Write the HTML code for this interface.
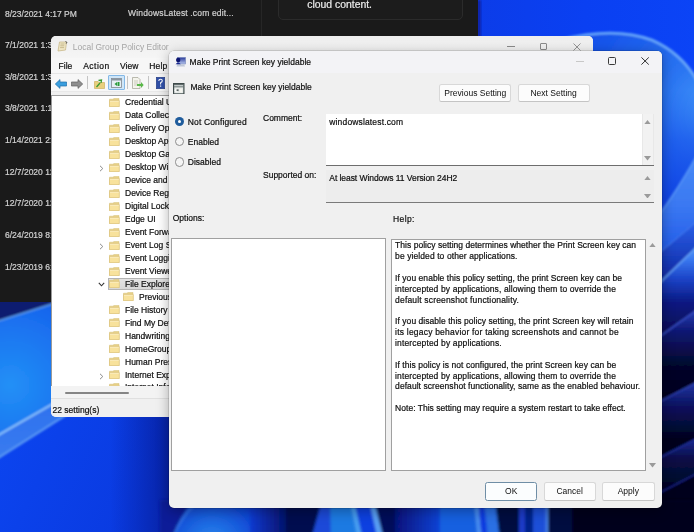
<!DOCTYPE html>
<html><head><meta charset="utf-8">
<style>
*{margin:0;padding:0;box-sizing:border-box}
html,body{width:694px;height:532px;overflow:hidden}
body{position:relative;font-family:"Liberation Sans",sans-serif;font-size:8.5px;color:#0e0e0e;background:#0a3ae0}
.abs{position:absolute}
.t{position:absolute;white-space:nowrap;line-height:10px;-webkit-text-stroke:0.2px currentColor}
#dark{will-change:transform;position:absolute;left:0;top:0;width:478px;height:301.5px;background:#1a1a1a;overflow:hidden}
#dark .t{color:#d2d2d2}
#lg{will-change:transform;position:absolute;left:51px;top:36px;width:542px;height:381px;background:#f0f0f0;border-radius:5px;overflow:hidden}
#dlg{will-change:transform;position:absolute;left:169px;top:51px;width:493px;height:457px;background:#f0f0f0;border-radius:5px;
 box-shadow:0 3px 13px rgba(0,0,0,.32), 0 0 0 0.5px rgba(0,0,0,.22)}
.btn{position:absolute;background:#fcfcfc;border:1px solid #d8d8d8;border-bottom-color:#c4c4c4;border-radius:2.5px;text-align:center;white-space:nowrap}
</style></head>
<body>
<svg width="0" height="0" style="position:absolute"><defs>
<g id="fold"><path d="M0.5,1.2 L4,1.2 L5,0.4 L10,0.4 L10,8.5 L0.5,8.5 Z" fill="#e6cf86" stroke="#d4bc70" stroke-width="0.5"/>
<path d="M0.5,2.6 L10.3,2.6 L10.3,8.7 L0.5,8.7 Z" fill="#f8e29c" stroke="#d8c07a" stroke-width="0.6"/>
<path d="M1,3.3 L9.8,3.3" stroke="#fcf0c8" stroke-width="0.8"/></g>
</defs></svg>
<svg id="wallsvg" width="694" height="532" viewBox="0 0 694 532" style="position:absolute;left:0;top:0">
<defs>
 <filter id="bl1" x="-10%" y="-10%" width="120%" height="120%"><feGaussianBlur stdDeviation="1.6"/></filter>
 <filter id="bl2" x="-10%" y="-10%" width="120%" height="120%"><feGaussianBlur stdDeviation="1"/></filter>
 <linearGradient id="gBotL" x1="0" y1="0" x2="1" y2="0.6">
  <stop offset="0" stop-color="#0c48f4"/><stop offset="1" stop-color="#0a3ae0"/>
 </linearGradient>
 <radialGradient id="gGlowL" cx="10" cy="385" r="110" gradientUnits="userSpaceOnUse">
  <stop offset="0" stop-color="#2290f6"/><stop offset="0.6" stop-color="#1a70f0"/><stop offset="1" stop-color="#1458e8"/>
 </radialGradient>
 <radialGradient id="gBloomTR" cx="700" cy="140" r="120" gradientUnits="userSpaceOnUse">
  <stop offset="0" stop-color="#3a8af6"/><stop offset="0.7" stop-color="#1e5ef0"/><stop offset="0.92" stop-color="#2a6cf2"/><stop offset="1" stop-color="#5a9cf8"/>
 </radialGradient>
 <radialGradient id="gGlowB" cx="212" cy="545" r="55" gradientUnits="userSpaceOnUse">
  <stop offset="0" stop-color="#2a8aee"/><stop offset="1" stop-color="#0a3ad0"/>
 </radialGradient>
 <linearGradient id="gBand1" x1="0" y1="0" x2="0" y2="1">
  <stop offset="0" stop-color="#4a92f6"/><stop offset="0.35" stop-color="#2a6cf0"/><stop offset="1" stop-color="#0e40dc"/>
 </linearGradient>
 <linearGradient id="gBand3" x1="0" y1="0" x2="0" y2="1">
  <stop offset="0" stop-color="#6aa6fa"/><stop offset="0.25" stop-color="#2a5ad8"/><stop offset="1" stop-color="#060c48"/>
 </linearGradient>
 <linearGradient id="gDim" x1="0" y1="0" x2="0" y2="1">
  <stop offset="0" stop-color="#25389e"/><stop offset="1" stop-color="#050a36"/>
 </linearGradient>
 <linearGradient id="gStrip" x1="0" y1="0" x2="0" y2="1">
  <stop offset="0" stop-color="#0c40e2"/><stop offset="1" stop-color="#2a78f2"/>
 </linearGradient>
</defs>
<rect x="0" y="0" width="694" height="532" fill="#0a3ae0"/>
<!-- top right -->
<rect x="470" y="0" width="230" height="320" fill="#0a3ae6"/>
<linearGradient id="gTR" x1="0" y1="0" x2="1" y2="0"><stop offset="0" stop-color="#0c3ce8"/><stop offset="0.5" stop-color="#0a40f2"/><stop offset="1" stop-color="#0b44f6"/></linearGradient>
<rect x="470" y="0" width="230" height="200" fill="url(#gTR)"/>
<rect x="477" y="0" width="4" height="40" fill="#0a24a8" filter="url(#bl2)"/>
<radialGradient id="gBl" cx="720" cy="115" r="150" gradientUnits="userSpaceOnUse">
 <stop offset="0" stop-color="#48a0fa"/><stop offset="0.4" stop-color="#2a74f2"/><stop offset="1" stop-color="#1450ea"/>
</radialGradient>
<g filter="url(#bl2)">
<path d="M560,40 Q614,26 652,40 Q684,54 700,86 L700,230 L560,230 Z" fill="url(#gBl)"/>
<path d="M560,40 Q614,26 652,40 Q684,54 700,86" fill="none" stroke="#68a8fa" stroke-width="2.6"/>
</g>
<linearGradient id="gMid" x1="0" y1="0" x2="0" y2="1"><stop offset="0" stop-color="#1a58ea" stop-opacity="0"/><stop offset="0.35" stop-color="#1650ea" stop-opacity="0.6"/><stop offset="1" stop-color="#0a36de"/></linearGradient>
<rect x="650" y="90" width="50" height="140" fill="url(#gMid)"/>
<linearGradient id="gPA" x1="0" y1="0" x2="0" y2="1" gradientUnits="userSpaceOnUse" x2u="0"><stop offset="0" stop-color="#4a8cf6"/><stop offset="1" stop-color="#1a52e4"/></linearGradient>
<linearGradient id="gPAu" x1="0" y1="150" x2="0" y2="262" gradientUnits="userSpaceOnUse"><stop offset="0" stop-color="#4a8cf6"/><stop offset="0.5" stop-color="#3a78f2"/><stop offset="1" stop-color="#1e56e6"/></linearGradient>
<linearGradient id="gPB" x1="0" y1="219" x2="0" y2="292" gradientUnits="userSpaceOnUse"><stop offset="0" stop-color="#2a62ec"/><stop offset="1" stop-color="#0a1c92"/></linearGradient>
<linearGradient id="gPD" x1="0" y1="244" x2="0" y2="343" gradientUnits="userSpaceOnUse"><stop offset="0" stop-color="#5a9cf8"/><stop offset="0.15" stop-color="#3a7af0"/><stop offset="0.35" stop-color="#1c44c8"/><stop offset="0.6" stop-color="#0a1880"/><stop offset="1" stop-color="#060a44"/></linearGradient>
<linearGradient id="gPE" x1="0" y1="308" x2="0" y2="406" gradientUnits="userSpaceOnUse"><stop offset="0" stop-color="#2a40b8"/><stop offset="0.25" stop-color="#0c1670"/><stop offset="0.6" stop-color="#04062a"/><stop offset="1" stop-color="#02031a"/></linearGradient>
<linearGradient id="gPF" x1="0" y1="381" x2="0" y2="463" gradientUnits="userSpaceOnUse"><stop offset="0" stop-color="#2438a8"/><stop offset="0.3" stop-color="#0a1260"/><stop offset="0.7" stop-color="#03041e"/><stop offset="1" stop-color="#020316"/></linearGradient>
<linearGradient id="gPG" x1="0" y1="437" x2="0" y2="498" gradientUnits="userSpaceOnUse"><stop offset="0" stop-color="#1e2e98"/><stop offset="0.35" stop-color="#080c48"/><stop offset="1" stop-color="#020316"/></linearGradient>
<g filter="url(#bl2)">
<path d="M650,226 Q672,200 700,150 L700,219 L650,260.6 Z" fill="url(#gPAu)"/>
<path d="M650,260.6 L700,219 L700,243.7 L650,292.3 Z" fill="url(#gPB)"/>
<path d="M650,292.3 L700,243.7 L700,307.7 L650,343.4 Z" fill="url(#gPD)"/>
<path d="M650,343.4 L700,307.7 L700,380.7 L650,406.5 Z" fill="url(#gPE)"/>
<path d="M650,406.5 L700,380.7 L700,437 L650,462.7 Z" fill="url(#gPF)"/>
<path d="M650,462.7 L700,437 L700,472 L650,497.7 Z" fill="url(#gPG)"/>
<path d="M560,497.7 L650,497.7 L700,472 L700,540 L560,540 Z" fill="#03051c"/>
<path d="M650,226 Q672,200 700,150" fill="none" stroke="#5a98f8" stroke-width="1.5"/>
<path d="M650,260.6 L700,219" fill="none" stroke="#4a80f0" stroke-width="1"/>
<path d="M650,292.3 L700,243.7" fill="none" stroke="#6aa8fa" stroke-width="1.4"/>
<path d="M650,343.4 L700,307.7" fill="none" stroke="#3a50c8" stroke-width="1.3"/>
<path d="M650,406.5 L700,380.7" fill="none" stroke="#3246b8" stroke-width="1.3"/>
<path d="M650,462.7 L700,437" fill="none" stroke="#2432a0" stroke-width="1.3"/>
<path d="M650,497.7 L700,472" fill="none" stroke="#1c2890" stroke-width="1.2"/>
</g>
<!-- left bottom -->
<rect x="0" y="300" width="175" height="232" fill="url(#gBotL)"/>
<linearGradient id="gShR" x1="0" y1="0" x2="1" y2="0"><stop offset="0" stop-color="#0620a0" stop-opacity="0"/><stop offset="1" stop-color="#061a90" stop-opacity="0.85"/></linearGradient>
<rect x="110" y="417" width="65" height="120" fill="url(#gShR)"/>
<g filter="url(#bl2)">
<path d="M-5,300 L180,300 L180,331 L-5,437 Z" fill="url(#gGlowL)"/>
<path d="M-5,295 L65,295 L65,300 L-5,322 Z" fill="#0a1a70"/>
<path d="M-5,322 L65,300" stroke="#5a9ae8" stroke-width="1.6" fill="none"/>
<linearGradient id="gBandL" x1="0" y1="0" x2="0" y2="1"><stop offset="0" stop-color="#4a90f4"/><stop offset="0.5" stop-color="#2c70ee"/><stop offset="1" stop-color="#3a7cf0"/></linearGradient><path d="M-5,437 L180,331 L180,343 L-5,460 Z" fill="url(#gBandL)"/>
<path d="M-5,437 L180,331" stroke="#8cc4fc" stroke-width="1.8" fill="none"/>
<path d="M-5,460 L180,343" stroke="#5a98f4" stroke-width="2" fill="none"/>
</g>
<!-- bottom strip -->
<g filter="url(#bl1)">
<rect x="168" y="500" width="412" height="40" fill="#0a3ad0"/>
<path d="M160,500 L194,500 Q180,515 172,540 L160,540 Z" fill="#081e98"/>
<path d="M194,500 L258,500 L258,540 L172,540 Q180,515 194,500 Z" fill="url(#gGlowB)"/>
<path d="M194,505 Q180,518 172,540" fill="none" stroke="#3a80ee" stroke-width="1.5"/>
<linearGradient id="gB2" x1="0" y1="0" x2="1" y2="0"><stop offset="0" stop-color="#0a3ad0"/><stop offset="1" stop-color="#050e60"/></linearGradient><rect x="250" y="500" width="40" height="40" fill="url(#gB2)"/>
<path d="M286,500 L324,500 L311,540 L286,540 Z" fill="#040c50"/>
<path d="M322,500 L332,500 L331,540 L311,540 Z" fill="#1a4ad8"/>
<path d="M330,500 L351,500 L360,540 L331,540 Z" fill="#1c7ae2"/>
<path d="M350,500 L354,500 L363,540 L358,540 Z" fill="#4aa0f2"/>
<path d="M354,500 L370,500 L380,540 L363,540 Z" fill="#1040e0"/>
<path d="M369,500 L374,500 L384,540 L378,540 Z" fill="#5aa0f4"/>
<path d="M374,500 L405,500 L405,540 L384,540 Z" fill="#05105a"/>
<linearGradient id="gB4" x1="0" y1="0" x2="1" y2="0"><stop offset="0" stop-color="#06127a"/><stop offset="1" stop-color="#0a44d8"/></linearGradient><rect x="395" y="500" width="46" height="40" fill="url(#gB4)"/>
<path d="M440,500 L476,500 L480,540 L440,540 Z" fill="#1560e0"/>
<path d="M474,500 L478,500 L482,540 L478,540 Z" fill="#4a90f0"/>
<path d="M478,500 L484,500 L488,540 L482,540 Z" fill="#0c3ae0"/>
<path d="M484,500 L495,500 L500,540 L488,540 Z" fill="#2a70e4"/>
<path d="M495,500 L520,500 L521,540 L500,540 Z" fill="#050a40"/>
<rect x="519" y="500" width="6" height="40" fill="#1a3ac8"/>
<rect x="525" y="500" width="8" height="40" fill="#06208a"/>
<rect x="533" y="500" width="14" height="40" fill="#1a50d8"/>
<rect x="546" y="500" width="2" height="40" fill="#4a88ee"/>
<rect x="548" y="500" width="24" height="40" fill="#060c40"/>
<rect x="572" y="500" width="130" height="40" fill="#02041a"/>
</g>
</svg>

<div id="dark">
<div class="t" style="left:5.00px;top:8.55px;">8/23/2021 4:17 PM</div>
<div class="t" style="left:5.00px;top:40.19px;">7/1/2021 1:30 PM</div>
<div class="t" style="left:5.00px;top:71.83px;">3/8/2021 1:30 PM</div>
<div class="t" style="left:5.00px;top:103.47px;">3/8/2021 1:12 PM</div>
<div class="t" style="left:5.00px;top:135.11px;">1/14/2021 2:30 PM</div>
<div class="t" style="left:5.00px;top:166.75px;">12/7/2020 12:00 PM</div>
<div class="t" style="left:5.00px;top:198.39px;">12/7/2020 12:00 PM</div>
<div class="t" style="left:5.00px;top:230.03px;">6/24/2019 8:00 PM</div>
<div class="t" style="left:5.00px;top:261.67px;">1/23/2019 6:00 PM</div>
<div class="t" style="left:128.10px;top:8.15px;letter-spacing:0.16px">WindowsLatest .com edit...</div>
<div class="abs" style="left:261px;top:0;width:1px;height:301px;background:#262626"></div>
<div class="abs" style="left:278px;top:-12px;width:185px;height:31.5px;border:1px solid #2b2b2b;border-radius:5px;background:#1c1c1c"></div>
<div class="t" style="left:307.3px;top:-1px;font-size:10.4px;line-height:11px;color:#ececec">cloud content.</div>
</div>
<div id="lg">
<div class="abs" style="left:0;top:0;width:542px;height:22px;background:linear-gradient(#eeeeee,#f5f5f5)"></div>
<svg class="abs" style="left:6px;top:5px" width="11" height="11" viewBox="0 0 11 11"><path d="M2.5,1 L9.5,1 L8.5,9 L1,10 Z" fill="#efe6c4" stroke="#c9b98a" stroke-width="0.8"/><path d="M3.5,3 L7.5,3 M3.3,4.8 L7.3,4.8 M3.1,6.6 L7.1,6.6" stroke="#b8a878" stroke-width="0.7"/><path d="M8.5,0.5 L10,1.5 L9.2,2.6" fill="none" stroke="#505050" stroke-width="1"/></svg>
<div class="t" style="left:21.80px;top:5.85px;color:#a4a4a4;font-size:8.5px;-webkit-text-stroke:0">Local Group Policy Editor</div>
<div class="abs" style="left:456.2px;top:10px;width:8px;height:1px;background:#8a8a8a"></div>
<div class="abs" style="left:489px;top:6.7px;width:7px;height:7px;border:1px solid #8a8a8a;border-radius:1px"></div>
<svg class="abs" style="left:521.5px;top:6.5px" width="8" height="8" viewBox="0 0 8 8"><path d="M0.5,0.5 L7.5,7.5 M7.5,0.5 L0.5,7.5" stroke="#8a8a8a" stroke-width="0.9"/></svg>
<div class="abs" style="left:0;top:22px;width:542px;height:15.6px;background:#f7f7f7"></div>
<div class="abs" style="left:0;top:37.4px;width:542px;height:1px;background:#e6e6e6"></div>
<div class="t" style="left:7.60px;top:24.55px;letter-spacing:0px">File</div>
<div class="t" style="left:32.20px;top:24.55px;letter-spacing:0.5px">Action</div>
<div class="t" style="left:69.00px;top:24.55px;letter-spacing:0px">View</div>
<div class="t" style="left:98.20px;top:24.55px;letter-spacing:0.2px">Help</div>
<div class="abs" style="left:0;top:38.4px;width:542px;height:16.2px;background:#f7f7f7"></div>
<div class="abs" style="left:0;top:54.6px;width:542px;height:4.7px;background:#f0f0f0;border-top:1px solid #e8e8e8"></div>
<div class="abs" style="left:0;top:59.3px;width:542px;height:1px;background:#a0a0a0"></div>
<svg class="abs" style="left:3.5px;top:42.5px" width="12" height="10" viewBox="0 0 12 10"><path d="M0.3,5 L5,0.6 L5,3 L11.6,3 L11.6,7 L5,7 L5,9.4 Z" fill="#3a9ede" stroke="#1f6fa8" stroke-width="0.7"/></svg>
<svg class="abs" style="left:19.8px;top:42.5px" width="12" height="10" viewBox="0 0 12 10"><path d="M11.7,5 L7,0.6 L7,3 L0.4,3 L0.4,7 L7,7 L7,9.4 Z" fill="#8e8e8e" stroke="#5e5e5e" stroke-width="0.7"/></svg>
<div class="abs" style="left:36.3px;top:40px;width:1px;height:13px;background:#c4c4c4"></div>
<div class="abs" style="left:75.5px;top:40px;width:1px;height:13px;background:#c4c4c4"></div>
<div class="abs" style="left:97.4px;top:40px;width:1px;height:13px;background:#c4c4c4"></div>
<svg class="abs" style="left:43px;top:42.5px" width="11" height="10" viewBox="0 0 11 10"><path d="M0.5,2.5 L4,2.5 L5,3.5 L10.5,3.5 L10.5,9.5 L0.5,9.5 Z" fill="#e8cf7c" stroke="#c8a850" stroke-width="0.6"/><path d="M2.5,8 L6,4 M4.5,1.5 L7.5,1 L7,4" fill="none" stroke="#3a9a30" stroke-width="1.3"/></svg>
<div class="abs" style="left:57.3px;top:39.3px;width:16.4px;height:14.3px;background:#cfe6f8;border:1px solid #84b8e6;border-radius:1px"></div>
<svg class="abs" style="left:60px;top:41.5px" width="11" height="10" viewBox="0 0 11 10"><rect x="0.5" y="0.5" width="10" height="9" fill="#e6eef4" stroke="#808890" stroke-width="0.8"/><rect x="0.5" y="0.5" width="10" height="2" fill="#8a96a0"/><path d="M6,4 L3.5,6 L6,8 Z" fill="#2a9a3a"/><rect x="6.5" y="4" width="2" height="4" fill="#2a9a3a"/></svg>
<svg class="abs" style="left:81px;top:41px" width="12" height="12" viewBox="0 0 12 12"><path d="M0.5,0.5 L6,0.5 L8,2.5 L8,11.5 L0.5,11.5 Z" fill="#f4f4ec" stroke="#a0a090" stroke-width="0.7"/><path d="M2,4 L6,4 M2,6 L6,6 M2,8 L5,8" stroke="#b0b0a0" stroke-width="0.6"/><path d="M5,7 L9,7 L9,5 L11.7,8 L9,11 L9,9 L5,9 Z" fill="#5ab84a"/></svg>
<svg class="abs" style="left:105px;top:41px" width="9" height="12" viewBox="0 0 9 12"><rect x="0.3" y="0.3" width="8.4" height="11.4" fill="#3050a8" stroke="#203880" stroke-width="0.6"/><path d="M2.8,4 Q2.8,2.2 4.5,2.2 Q6.3,2.2 6.3,3.8 Q6.3,5 4.6,5.8 L4.6,7.5" fill="none" stroke="#fff" stroke-width="1.1"/><rect x="4" y="8.5" width="1.2" height="1.2" fill="#fff"/></svg>
<div class="abs" style="left:0;top:60.3px;width:542px;height:290px;background:#fff;overflow:hidden"><svg class="abs" style="left:58.30px;top:1.60px" width="11" height="9"><use href="#fold"/></svg><div class="t" style="left:74.00px;top:0.85px;">Credential User Interface</div><svg class="abs" style="left:58.30px;top:14.57px" width="11" height="9"><use href="#fold"/></svg><div class="t" style="left:74.00px;top:13.82px;">Data Collection and Preview Builds</div><svg class="abs" style="left:58.30px;top:27.54px" width="11" height="9"><use href="#fold"/></svg><div class="t" style="left:74.00px;top:26.79px;">Delivery Optimization</div><svg class="abs" style="left:58.30px;top:40.51px" width="11" height="9"><use href="#fold"/></svg><div class="t" style="left:74.00px;top:39.76px;">Desktop App Installer</div><svg class="abs" style="left:58.30px;top:53.48px" width="11" height="9"><use href="#fold"/></svg><div class="t" style="left:74.00px;top:52.73px;">Desktop Gadgets</div><svg class="abs" style="left:47.8px;top:69.15px" width="5" height="7" viewBox="0 0 5 7"><path d="M1,0.8 L3.8,3.5 L1,6.2" fill="none" stroke="#8a8a8a" stroke-width="1"/></svg><svg class="abs" style="left:58.30px;top:66.45px" width="11" height="9"><use href="#fold"/></svg><div class="t" style="left:74.00px;top:65.70px;">Desktop Window Manager</div><svg class="abs" style="left:58.30px;top:79.42px" width="11" height="9"><use href="#fold"/></svg><div class="t" style="left:74.00px;top:78.67px;">Device and Driver Compatibility</div><svg class="abs" style="left:58.30px;top:92.39px" width="11" height="9"><use href="#fold"/></svg><div class="t" style="left:74.00px;top:91.64px;">Device Registration</div><svg class="abs" style="left:58.30px;top:105.36px" width="11" height="9"><use href="#fold"/></svg><div class="t" style="left:74.00px;top:104.61px;">Digital Locker</div><svg class="abs" style="left:58.30px;top:118.33px" width="11" height="9"><use href="#fold"/></svg><div class="t" style="left:74.00px;top:117.58px;">Edge UI</div><svg class="abs" style="left:58.30px;top:131.30px" width="11" height="9"><use href="#fold"/></svg><div class="t" style="left:74.00px;top:130.55px;">Event Forwarding</div><svg class="abs" style="left:47.8px;top:146.97px" width="5" height="7" viewBox="0 0 5 7"><path d="M1,0.8 L3.8,3.5 L1,6.2" fill="none" stroke="#8a8a8a" stroke-width="1"/></svg><svg class="abs" style="left:58.30px;top:144.27px" width="11" height="9"><use href="#fold"/></svg><div class="t" style="left:74.00px;top:143.52px;">Event Log Service</div><svg class="abs" style="left:58.30px;top:157.24px" width="11" height="9"><use href="#fold"/></svg><div class="t" style="left:74.00px;top:156.49px;">Event Logging</div><svg class="abs" style="left:58.30px;top:170.21px" width="11" height="9"><use href="#fold"/></svg><div class="t" style="left:74.00px;top:169.46px;">Event Viewer</div><div class="abs" style="left:57.2px;top:181.88px;width:130px;height:12.3px;background:linear-gradient(#e4e4e4,#d8d8d8);border:1px solid #b4b4b4"></div><svg class="abs" style="left:47px;top:186.18px" width="7" height="5" viewBox="0 0 7 5"><path d="M0.8,0.8 L3.5,3.8 L6.2,0.8" fill="none" stroke="#333" stroke-width="1.1"/></svg><svg class="abs" style="left:58.30px;top:183.18px" width="11" height="9"><use href="#fold"/></svg><div class="t" style="left:74.00px;top:182.43px;">File Explorer</div><svg class="abs" style="left:72.30px;top:196.15px" width="11" height="9"><use href="#fold"/></svg><div class="t" style="left:88.00px;top:195.40px;">Previous Versions</div><svg class="abs" style="left:58.30px;top:209.12px" width="11" height="9"><use href="#fold"/></svg><div class="t" style="left:74.00px;top:208.37px;">File History</div><svg class="abs" style="left:58.30px;top:222.09px" width="11" height="9"><use href="#fold"/></svg><div class="t" style="left:74.00px;top:221.34px;">Find My Device</div><svg class="abs" style="left:58.30px;top:235.06px" width="11" height="9"><use href="#fold"/></svg><div class="t" style="left:74.00px;top:234.31px;">Handwriting</div><svg class="abs" style="left:58.30px;top:248.03px" width="11" height="9"><use href="#fold"/></svg><div class="t" style="left:74.00px;top:247.28px;">HomeGroup</div><svg class="abs" style="left:58.30px;top:261.00px" width="11" height="9"><use href="#fold"/></svg><div class="t" style="left:74.00px;top:260.25px;">Human Presence</div><svg class="abs" style="left:47.8px;top:276.67px" width="5" height="7" viewBox="0 0 5 7"><path d="M1,0.8 L3.8,3.5 L1,6.2" fill="none" stroke="#8a8a8a" stroke-width="1"/></svg><svg class="abs" style="left:58.30px;top:273.97px" width="11" height="9"><use href="#fold"/></svg><div class="t" style="left:74.00px;top:273.22px;">Internet Explorer</div><svg class="abs" style="left:58.30px;top:286.94px" width="11" height="9"><use href="#fold"/></svg><div class="t" style="left:74.00px;top:286.19px;">Internet Information Services</div></div>
<div class="abs" style="left:0;top:59.3px;width:1px;height:291px;background:#9a9a9a"></div>
<div class="abs" style="left:0;top:350.3px;width:542px;height:12.1px;background:#f3f3f3"></div>
<div class="abs" style="left:13.6px;top:356px;width:64.2px;height:1.6px;background:#858585;border-radius:1px"></div>
<div class="abs" style="left:0;top:362.2px;width:542px;height:1px;background:#e0e0e0"></div>
<div class="abs" style="left:0;top:363.2px;width:542px;height:17.8px;background:#f0f0f0"></div>
<div class="t" style="left:1.50px;top:368.65px;">22 setting(s)</div>
</div>
<div id="dlg"><div class="abs" style="left:0;top:-1px;width:493px;height:458px">
<div class="abs" style="left:0;top:1px;width:493px;height:22px;background:#f3f3f6;border-radius:5px 5px 0 0"></div>
<svg class="abs" style="left:6px;top:7px" width="11" height="10" viewBox="0 0 11 10"><defs><linearGradient id="mon" x1="0" y1="0" x2="0" y2="1"><stop offset="0" stop-color="#2a3a9a"/><stop offset="1" stop-color="#b8c8f0"/></linearGradient></defs><rect x="2.5" y="0.5" width="8" height="6.5" fill="url(#mon)" stroke="#7080b8" stroke-width="0.6"/><path d="M1.5,9.5 L10,9.5 L9.2,7.6 L2.3,7.6 Z" fill="#c0c8d8"/><circle cx="3.2" cy="3" r="2.2" fill="#0c1470"/><path d="M0.6,7.2 Q3.2,3.8 5.8,7.2 Z" fill="#1a2890"/></svg>
<div class="t" style="left:20.60px;top:6.85px;">Make Print Screen key yieldable</div>
<div class="abs" style="left:407px;top:10.6px;width:7.6px;height:1px;background:#c8c8c8"></div>
<div class="abs" style="left:439.1px;top:7.3px;width:7.8px;height:7.6px;border:1.2px solid #3a3a3a;border-radius:1.5px"></div>
<svg class="abs" style="left:471.8px;top:7.2px" width="8.2" height="8" viewBox="0 0 8.2 8"><path d="M0.4,0.4 L7.8,7.6 M7.8,0.4 L0.4,7.6" stroke="#333" stroke-width="1"/></svg>
<svg class="abs" style="left:4px;top:32.8px" width="11.5" height="11.5" viewBox="0 0 11.5 11.5"><rect x="0.6" y="0.6" width="10.3" height="10.3" fill="#e4e8e6" stroke="#3e4a4a" stroke-width="1.2"/><rect x="1" y="1.2" width="9.5" height="1" fill="#4a5656"/><rect x="1.5" y="2.4" width="8.5" height="0.9" fill="#c4cccc"/><rect x="1" y="3.4" width="9.5" height="0.9" fill="#5a6666"/><circle cx="3.6" cy="7.3" r="1.9" fill="#f6f8f6"/><rect x="3.6" y="6.3" width="2" height="1.8" fill="#5a6262"/><rect x="6.6" y="5.6" width="2.6" height="4" fill="#f4f4ee"/></svg>
<div class="t" style="left:21.40px;top:32.25px;">Make Print Screen key yieldable</div>
<div class="btn" style="line-height:15.5px;left:270.3px;top:34.2px;width:72px;height:18px;padding-top:0.5px">Previous Setting</div>
<div class="btn" style="line-height:15.5px;left:348.5px;top:34.2px;width:72.3px;height:18px;padding-top:0.5px">Next Setting</div>
<div class="abs" style="left:6.1px;top:66.80px;width:9.4px;height:9.4px;border-radius:50%;background:#1f5c9c"></div>
<div class="abs" style="left:9.1px;top:69.80px;width:3.4px;height:3.4px;border-radius:50%;background:#fff"></div>
<div class="t" style="left:18.80px;top:66.65px;letter-spacing:0.13px">Not Configured</div>
<div class="abs" style="left:6.1px;top:86.80px;width:9.4px;height:9.4px;border-radius:50%;border:1px solid #8c8c8c;background:#f4f4f4"></div>
<div class="t" style="left:18.80px;top:86.65px;">Enabled</div>
<div class="abs" style="left:6.1px;top:107.20px;width:9.4px;height:9.4px;border-radius:50%;border:1px solid #8c8c8c;background:#f4f4f4"></div>
<div class="t" style="left:18.80px;top:107.05px;">Disabled</div>
<div class="t" style="left:94.00px;top:63.15px;">Comment:</div>
<div class="t" style="left:94.00px;top:119.65px;">Supported on:</div>
<div class="t" style="left:3.70px;top:163.45px;">Options:</div>
<div class="t" style="left:224.00px;top:163.75px;letter-spacing:0.4px">Help:</div>
<div class="abs" style="left:156.5px;top:64.2px;width:316px;height:50.4px;background:#fff"></div>
<div class="abs" style="left:472.5px;top:64.2px;width:12.6px;height:50.4px;background:#f2f2f2;border-left:1px solid #e8e8e8;border-right:1px solid #e8e8e8"></div>
<div class="abs" style="left:156.5px;top:114.6px;width:328.6px;height:1px;background:#6e6e6e"></div>
<svg class="abs" style="left:475.30px;top:69.80px" width="7" height="4.5" viewBox="0 0 7 4.5"><path d="M0,4.5 L3.5,0 L7,4.5 Z" fill="#9a9a9a"/></svg><svg class="abs" style="left:475.30px;top:106.40px" width="7" height="4.5" viewBox="0 0 7 4.5"><path d="M0,0 L3.5,4.5 L7,0 Z" fill="#9a9a9a"/></svg>
<div class="t" style="left:160.30px;top:66.95px;letter-spacing:0.15px">windowslatest.com</div>
<div class="abs" style="left:156.5px;top:119.6px;width:328.6px;height:33.3px;background:#ededed"></div>
<div class="abs" style="left:156.5px;top:152.3px;width:328.6px;height:1px;background:#7a7a7a"></div>
<svg class="abs" style="left:475.30px;top:125.70px" width="7" height="4.5" viewBox="0 0 7 4.5"><path d="M0,4.5 L3.5,0 L7,4.5 Z" fill="#9a9a9a"/></svg><svg class="abs" style="left:475.30px;top:143.90px" width="7" height="4.5" viewBox="0 0 7 4.5"><path d="M0,0 L3.5,4.5 L7,0 Z" fill="#9a9a9a"/></svg>
<div class="t" style="left:160.30px;top:122.75px;letter-spacing:-0.06px">At least Windows 11 Version 24H2</div>
<div class="abs" style="left:2.3px;top:188.4px;width:214.7px;height:232.9px;background:#fff;border:1px solid #a0a0a0"></div>
<div class="abs" style="left:222.2px;top:188.5px;width:254.7px;height:232.2px;background:#fff;border:1px solid #a0a0a0"></div>
<svg class="abs" style="left:479.50px;top:192.80px" width="7" height="4.5" viewBox="0 0 7 4.5"><path d="M0,4.5 L3.5,0 L7,4.5 Z" fill="#9a9a9a"/></svg><svg class="abs" style="left:479.50px;top:413.20px" width="7" height="4.5" viewBox="0 0 7 4.5"><path d="M0,0 L3.5,4.5 L7,0 Z" fill="#9a9a9a"/></svg>
<div class="t" style="left:226.10px;top:190.45px;letter-spacing:0.023px">This policy setting determines whether the Print Screen key can</div>
<div class="t" style="left:226.10px;top:201.29px;letter-spacing:0.087px">be yielded to other applications.</div>
<div class="t" style="left:226.10px;top:222.97px;letter-spacing:0.048px">If you enable this policy setting, the print Screen key can be</div>
<div class="t" style="left:226.10px;top:233.81px;letter-spacing:0.119px">intercepted by applications, allowing them to override the</div>
<div class="t" style="left:226.10px;top:244.65px;letter-spacing:0.166px">default screenshot functionality.</div>
<div class="t" style="left:226.10px;top:266.33px;letter-spacing:0.045px">If you disable this policy setting, the print Screen key will retain</div>
<div class="t" style="left:226.10px;top:277.17px;letter-spacing:0.209px">its legacy behavior for taking screenshots and cannot be</div>
<div class="t" style="left:226.10px;top:288.01px;letter-spacing:0.133px">intercepted by applications.</div>
<div class="t" style="left:226.10px;top:309.69px;letter-spacing:0.063px">If this policy is not configured, the print Screen key can be</div>
<div class="t" style="left:226.10px;top:320.53px;letter-spacing:0.119px">intercepted by applications, allowing them to override the</div>
<div class="t" style="left:226.10px;top:331.37px;letter-spacing:0.060px">default screenshot functionality, same as the enabled behaviour.</div>
<div class="t" style="left:226.10px;top:353.05px;letter-spacing:0.021px">Note: This setting may require a system restart to take effect.</div>
<div class="btn" style="line-height:15.5px;left:316.1px;top:432.2px;width:52.2px;height:18.8px;padding-top:1.3px;border-color:#6f8ea6;background:#fbfdfe">OK</div>
<div class="btn" style="line-height:15.5px;left:374.5px;top:432.2px;width:52.4px;height:18.8px;padding-top:1.3px">Cancel</div>
<div class="btn" style="line-height:15.5px;left:433px;top:432.2px;width:52.6px;height:18.8px;padding-top:1.3px">Apply</div>
</div></div>
</body></html>
